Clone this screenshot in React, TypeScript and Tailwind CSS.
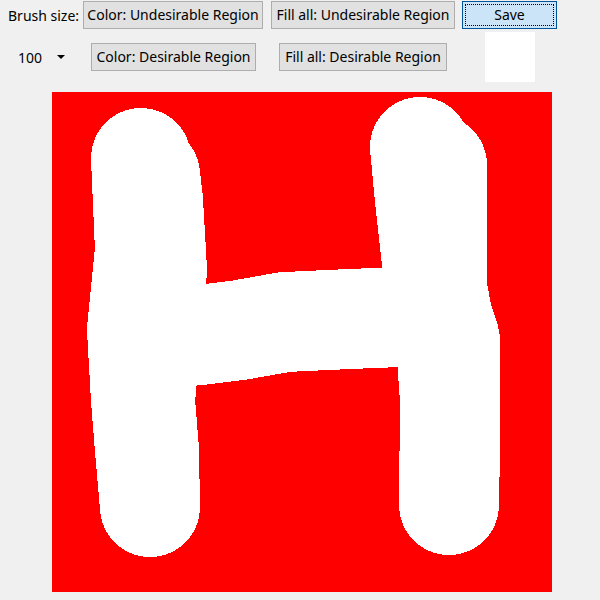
import React from "react";

const font = { fontFamily: '"Noto Sans", "Open Sans", sans-serif' };

function Btn({ label, w }: { label: string; w: string }) {
  return (
    <button
      className={`h-[28px] ${w} border border-[#adadad] bg-[#e1e1e1] text-[14px] leading-none text-black`}
    >
      {label}
    </button>
  );
}

export default function App() {
  // brush strokes painted on the canvas, brush size 100
  const strokes = [
    "M89,66 L93,158 L85,238 L89,308 L93,358 L98,415",
    "M98,83 L101,108 L105,178 L93,308 L97,358 L98,415",
    "M148,243 L188,238 L233,230 L298,227 L348,225",
    "M368,55 L373,108 L380,170 L393,238 L398,308 L397,413",
    "M385,73 L385,208 L398,248 L398,358 L397,413",
  ];

  return (
    <div className="min-h-screen w-full bg-[#f0f0f0] text-black" style={font}>
      <div className="flex h-[29px] items-center pt-[1px]">
        <span className="ml-[8px] w-[75px] text-[14px]">Brush size:</span>
        <Btn label="Color: Undesirable Region" w="w-[180px]" />
        <div className="w-[8px]" />
        <Btn label="Fill all: Undesirable Region" w="w-[184px]" />
        <div className="w-[7px]" />
        <button className="relative h-[28px] w-[95px] border border-[#005499] bg-[#cce4f7] text-[14px] leading-none">
          <span className="absolute inset-[2px] border border-dotted border-black" />
          Save
        </button>
      </div>

      <div className="mt-[3px] flex h-[50px] items-center">
        <div className="ml-[18px] flex w-[73px] items-center text-[14px]">
          <span>100</span>
          <svg width="8" height="4" viewBox="0 0 8 4" className="ml-[15px]">
            <polygon points="0,0 8,0 4,4" fill="#000" />
          </svg>
        </div>
        <Btn label="Color: Desirable Region" w="w-[165px]" />
        <div className="w-[23px]" />
        <Btn label="Fill all: Desirable Region" w="w-[168px]" />
        <div className="ml-[38px] h-[50px] w-[50px] bg-white" />
      </div>

      <div className="ml-[52px] mt-[10px] h-[500px] w-[500px] bg-[#ff0000]">
        <svg width="500" height="500" viewBox="0 0 500 500" shapeRendering="crispEdges">
          {strokes.map((d, i) => (
            <path
              key={i}
              d={d}
              fill="none"
              stroke="#fff"
              strokeWidth={100}
              strokeLinecap="round"
              strokeLinejoin="round"
            />
          ))}
        </svg>
      </div>
    </div>
  );
}
